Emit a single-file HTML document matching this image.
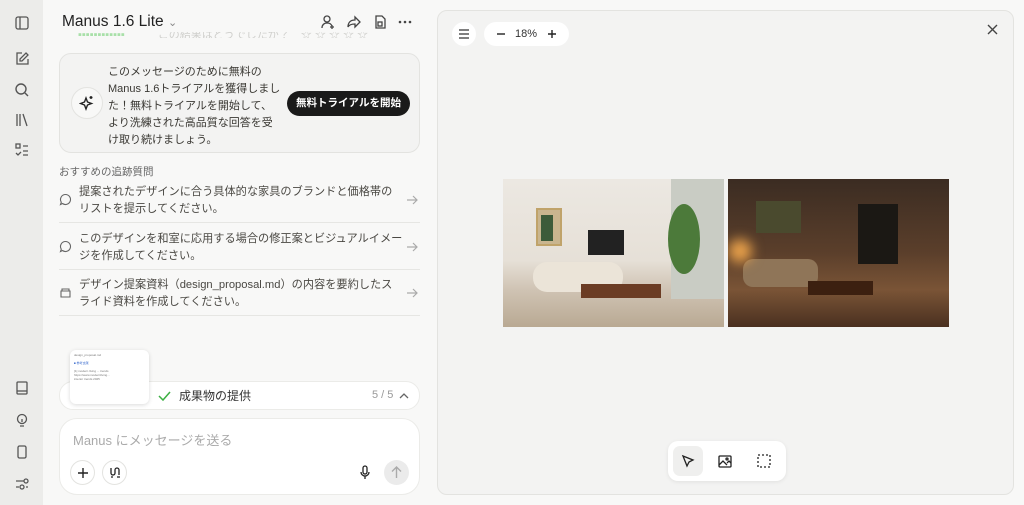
<!DOCTYPE html>
<html><head><meta charset="utf-8"><style>
*{box-sizing:border-box;margin:0;padding:0}
body{width:1024px;height:505px;overflow:hidden;background:#f8f8f7;font-family:"Liberation Sans","Noto Sans CJK JP",sans-serif;color:#34322d;position:relative}
.side{position:absolute;left:0;top:0;width:43px;height:505px;background:#ececea}
.ic{position:absolute;left:14px;width:16px;height:16px}
.abs{position:absolute}
.card{position:absolute;left:59px;top:53px;width:361px;height:100px;border:1px solid #e3e3e0;border-radius:12px;background:#f3f3f2}
.q{position:absolute;left:59px;width:361px;border-bottom:1px solid #e6e6e3;font-size:11.2px;line-height:17px;color:#4a4843}
.q span{position:absolute;left:20px;top:0;white-space:nowrap}
.q svg.a{position:absolute;right:2px;top:10px}
.q svg.l{position:absolute;left:0;top:9px}
.right{position:absolute;left:437px;top:10px;width:577px;height:485px;background:#f3f3f2;border:1px solid #e3e3e0;border-radius:10px}
</style></head><body>
<div class="side">
<svg class="ic" style="top:15px" viewBox="0 0 16 16" fill="none" stroke="#555" stroke-width="1.3"><rect x="2" y="2" width="12" height="12" rx="2"/><line x1="6" y1="2" x2="6" y2="14"/></svg>
<svg class="ic" style="top:51px" viewBox="0 0 16 16" fill="none" stroke="#555" stroke-width="1.3"><path d="M8 2H3v11h11V8"/><path d="M12 2l2 2-6 6H6V8z"/></svg>
<svg class="ic" style="top:82px" viewBox="0 0 16 16" fill="none" stroke="#555" stroke-width="1.4"><circle cx="7" cy="7" r="5"/><line x1="11" y1="11" x2="14" y2="14"/></svg>
<svg class="ic" style="top:112px" viewBox="0 0 16 16" fill="none" stroke="#555" stroke-width="1.3"><path d="M3 2v12M6 2v12M9 2l4 12"/></svg>
<svg class="ic" style="top:142px" viewBox="0 0 16 16" fill="none" stroke="#555" stroke-width="1.3"><rect x="2" y="2" width="4" height="4"/><path d="M2 11l2 2 3-3M9 4h5M9 9h5M9 13h5"/></svg>
<svg class="ic" style="top:380px" viewBox="0 0 16 16" fill="none" stroke="#555" stroke-width="1.3"><rect x="3" y="2" width="10" height="12" rx="1"/><line x1="3" y1="11" x2="13" y2="11"/></svg>
<svg class="ic" style="top:412px" viewBox="0 0 16 16" fill="none" stroke="#555" stroke-width="1.3"><circle cx="8" cy="7" r="4.5"/><path d="M6 14h4M8 7v3"/></svg>
<svg class="ic" style="top:444px" viewBox="0 0 16 16" fill="none" stroke="#555" stroke-width="1.3"><rect x="4" y="2" width="8" height="12" rx="1.5"/></svg>
<svg class="ic" style="top:476px" viewBox="0 0 16 16" fill="none" stroke="#555" stroke-width="1.3"><path d="M2 5h8M2 11h3M12 11h2"/><circle cx="12" cy="5" r="2"/><circle cx="8" cy="11" r="2"/></svg>
</div>
<div class="abs" style="left:78px;top:32px;width:340px;height:6px;overflow:hidden;font-size:11px;line-height:6px;color:#d0d0cd;white-space:nowrap"><span style="color:#a8e0a8">▪▪▪▪▪▪▪▪▪▪▪▪</span>　　　この結果はどうでしたか？　☆ ☆ ☆ ☆ ☆</div>
<div class="abs" style="left:43px;top:0;width:387px;height:32px;background:#f8f8f7"></div>
<div class="abs" style="left:62px;top:13px;font-size:15.5px;color:#222">Manus 1.6 Lite <span style="font-size:11px;color:#888">⌄</span></div>
<svg class="abs" style="left:320px;top:14px" width="16" height="16" viewBox="0 0 16 16" fill="none" stroke="#444" stroke-width="1.3"><circle cx="7" cy="5" r="3"/><path d="M2 14c0-3 2-5 5-5s4 1 5 3M12 11v4M10 13h4"/></svg>
<svg class="abs" style="left:346px;top:14px" width="16" height="16" viewBox="0 0 16 16" fill="none" stroke="#444" stroke-width="1.3"><path d="M9 3l5 5-5 5V10C5 10 3 11 2 13c0-4 2-7 7-7z"/></svg>
<svg class="abs" style="left:372px;top:14px" width="16" height="16" viewBox="0 0 16 16" fill="none" stroke="#444" stroke-width="1.3"><path d="M4 2h6l3 3v9H4z"/><rect x="6" y="8" width="4" height="4"/></svg>
<svg class="abs" style="left:397px;top:14px" width="16" height="16" viewBox="0 0 16 16" fill="#444"><circle cx="3" cy="8" r="1.3"/><circle cx="8" cy="8" r="1.3"/><circle cx="13" cy="8" r="1.3"/></svg>
<div class="card">
<div class="abs" style="left:11px;top:33px;width:32px;height:32px;border:1px solid #e3e3e0;border-radius:50%;background:#f8f8f7"><svg style="position:absolute;left:7px;top:7px" width="16" height="16" viewBox="0 0 16 16" fill="none" stroke="#222" stroke-width="1.4"><path d="M7 3l1.5 4 4 1.5-4 1.5L7 14l-1.5-4-4-1.5 4-1.5z"/><path d="M12 1v3M10.5 2.5h3"/></svg></div>
<div class="abs" style="left:48px;top:10px;font-size:11px;line-height:17px;color:#3a3833;white-space:nowrap">このメッセージのために無料の<br>Manus 1.6トライアルを獲得しまし<br>た！無料トライアルを開始して、<br>より洗練された高品質な回答を受<br>け取り続けましょう。</div>
<div class="abs" style="left:227px;top:37px;width:123px;height:25px;background:#1a1a1a;color:#fff;border-radius:13px;font-size:10.5px;font-weight:bold;text-align:center;line-height:25px">無料トライアルを開始</div>
</div>
<div class="abs" style="left:59px;top:164px;font-size:10.5px;color:#666">おすすめの追跡質問</div>
<div class="q" style="top:184px;height:39px"><svg class="l" width="13" height="13" viewBox="0 0 13 13" fill="none" stroke="#666" stroke-width="1.1"><path d="M6.5 1.5a5 5 0 1 1-3 9L1.5 11.5l.8-2.3A5 5 0 0 1 6.5 1.5z"/></svg><span>提案されたデザインに合う具体的な家具のブランドと価格帯の<br>リストを提示してください。</span><svg class="a" width="12" height="12" viewBox="0 0 12 12" fill="none" stroke="#aaa" stroke-width="1.2"><path d="M1 6h10M7 2l4 4-4 4"/></svg></div>
<div class="q" style="top:231px;height:39px"><svg class="l" width="13" height="13" viewBox="0 0 13 13" fill="none" stroke="#666" stroke-width="1.1"><path d="M6.5 1.5a5 5 0 1 1-3 9L1.5 11.5l.8-2.3A5 5 0 0 1 6.5 1.5z"/></svg><span>このデザインを和室に応用する場合の修正案とビジュアルイメー<br>ジを作成してください。</span><svg class="a" width="12" height="12" viewBox="0 0 12 12" fill="none" stroke="#aaa" stroke-width="1.2"><path d="M1 6h10M7 2l4 4-4 4"/></svg></div>
<div class="q" style="top:277px;height:39px"><svg class="l" width="13" height="13" viewBox="0 0 13 13" fill="none" stroke="#666" stroke-width="1.1"><path d="M2 5h9v6H2zM3 5V3h7v2"/></svg><span>デザイン提案資料（design_proposal.md）の内容を要約したス<br>ライド資料を作成してください。</span><svg class="a" width="12" height="12" viewBox="0 0 12 12" fill="none" stroke="#aaa" stroke-width="1.2"><path d="M1 6h10M7 2l4 4-4 4"/></svg></div>
<div class="abs" style="left:59px;top:381px;width:361px;height:29px;background:#fff;border:1px solid #ebebe8;border-radius:14px">
<svg class="abs" style="left:98px;top:8px" width="13" height="12" viewBox="0 0 13 12" fill="none" stroke="#3cb043" stroke-width="1.5"><path d="M1 6l4 4 7-8"/></svg>
<span class="abs" style="left:119px;top:5px;font-size:12px;color:#333">成果物の提供</span>
<span class="abs" style="left:312px;top:7px;font-size:11px;color:#999">5 / 5</span>
<svg class="abs" style="left:339px;top:10px" width="10" height="7" viewBox="0 0 10 7" fill="none" stroke="#666" stroke-width="1.3"><path d="M1 6l4-4 4 4"/></svg></div>
<div class="abs" style="left:70px;top:350px;width:79px;height:54px;background:#fff;border-radius:6px;box-shadow:0 1px 4px rgba(0,0,0,.15);font-size:3px;color:#777;padding:3px 4px;line-height:4px">design_proposal.md<br><br><span style="color:#36c">■ 参考文献</span><br><br>[1] modern living ... trends<br>https://www.modernliving...<br>interior trends 2025</div>
<div class="abs" style="left:59px;top:418px;width:361px;height:77px;background:#fff;border:1px solid #ebebe8;border-radius:18px">
<span class="abs" style="left:13px;top:11px;font-size:13px;color:#aaa">Manus にメッセージを送る</span>
<div class="abs" style="left:10px;top:41px;width:25px;height:25px;border:1px solid #e3e3e0;border-radius:50%"><svg style="position:absolute;left:6px;top:6px" width="12" height="12" viewBox="0 0 12 12" stroke="#222" stroke-width="1.4"><path d="M6 1v10M1 6h10"/></svg></div>
<div class="abs" style="left:42px;top:41px;width:25px;height:25px;border:1px solid #e3e3e0;border-radius:50%"><svg style="position:absolute;left:5px;top:5px" width="14" height="14" viewBox="0 0 14 14" fill="none" stroke="#222" stroke-width="1.3"><path d="M3 2v5a2 2 0 0 0 4 0V4a2 2 0 0 1 4 0v5M3 11h2M9 11h3"/></svg></div>
<svg class="abs" style="left:299px;top:46px" width="12" height="15" viewBox="0 0 12 15" fill="none" stroke="#222" stroke-width="1.3"><rect x="4" y="1" width="4" height="8" rx="2"/><path d="M2 7a4 4 0 0 0 8 0M6 11v3"/></svg>
<div class="abs" style="left:324px;top:41px;width:25px;height:25px;background:#ebebeb;border-radius:50%"><svg style="position:absolute;left:7px;top:6px" width="11" height="13" viewBox="0 0 11 13" fill="none" stroke="#aaa" stroke-width="1.4"><path d="M5.5 12V1M1 5.5l4.5-4.5 4.5 4.5"/></svg></div>
</div>
<div class="right">
<div class="abs" style="left:14px;top:11px;width:24px;height:24px;background:#fff;border-radius:12px"><svg style="position:absolute;left:6px;top:7px" width="12" height="10" viewBox="0 0 12 10" stroke="#333" stroke-width="1.2"><path d="M1 1h10M1 5h10M1 9h10"/></svg></div>
<div class="abs" style="left:46px;top:11px;width:85px;height:24px;background:#fff;border-radius:12px;font-size:11px;line-height:24px;color:#333"><svg class="abs" style="left:12px;top:7px" width="10" height="10" stroke="#222" stroke-width="1.4"><path d="M1 5h8"/></svg><span class="abs" style="left:31px">18%</span><svg class="abs" style="left:63px;top:7px" width="10" height="10" stroke="#222" stroke-width="1.4"><path d="M1 5h8M5 1v8"/></svg></div>
<svg class="abs" style="left:549px;top:13px" width="11" height="11" stroke="#444" stroke-width="1.4"><path d="M1 1l9 9M10 1l-9 9"/></svg>
<div class="abs" style="left:65px;top:168px;width:221px;height:148px;overflow:hidden;background:linear-gradient(180deg,#ece8e2 0%,#e6e0d7 55%,#cfc3b3 75%,#b9a993 100%)">
<div class="abs" style="left:33px;top:29px;width:26px;height:38px;background:#c9b58f;border:2px solid #c0a36a"></div>
<div class="abs" style="left:38px;top:36px;width:12px;height:26px;background:#3d5b3a"></div>
<div class="abs" style="left:85px;top:51px;width:36px;height:25px;background:#222"></div>
<div class="abs" style="left:168px;top:0;width:53px;height:120px;background:#c9ccc4"></div>
<div class="abs" style="left:165px;top:25px;width:32px;height:70px;background:#4c7a3a;border-radius:50%"></div>
<div class="abs" style="left:30px;top:83px;width:90px;height:30px;background:#ebe4d8;border-radius:14px"></div>
<div class="abs" style="left:78px;top:105px;width:80px;height:14px;background:#6b3c24"></div>
</div>
<div class="abs" style="left:290px;top:168px;width:221px;height:148px;overflow:hidden;background:linear-gradient(180deg,#3b2c22 0%,#5b3f2b 50%,#7a5436 75%,#4a3020 100%)">
<div class="abs" style="left:28px;top:22px;width:45px;height:32px;background:#4a4a2e"></div>
<div class="abs" style="left:130px;top:25px;width:40px;height:60px;background:#1b1814"></div>
<div class="abs" style="left:15px;top:80px;width:75px;height:28px;background:#8f7558;border-radius:10px"></div>
<div class="abs" style="left:80px;top:102px;width:65px;height:14px;background:#3c2010"></div>
<div class="abs" style="left:0;top:60px;width:24px;height:24px;background:#e8a04a;border-radius:50%;filter:blur(6px)"></div>
</div>
<div class="abs" style="left:230px;top:430px;width:118px;height:40px;background:#fff;border-radius:10px;box-shadow:0 1px 4px rgba(0,0,0,.08)">
<div class="abs" style="left:5px;top:5px;width:30px;height:30px;background:#efefee;border-radius:7px"><svg style="position:absolute;left:8px;top:8px" width="14" height="14" viewBox="0 0 14 14" fill="none" stroke="#222" stroke-width="1.3"><path d="M2 2l10 4-4 2-2 4z"/></svg></div>
<svg class="abs" style="left:50px;top:13px" width="15" height="15" viewBox="0 0 15 15" fill="none" stroke="#222" stroke-width="1.3"><rect x="1" y="2" width="12" height="11" rx="1"/><path d="M1 11l4-4 4 4M9 9l2-2 2 2"/><circle cx="9" cy="5" r="1"/></svg>
<svg class="abs" style="left:89px;top:13px" width="15" height="15" viewBox="0 0 15 15" fill="none" stroke="#222" stroke-width="1.3" stroke-dasharray="2 2"><rect x="1" y="1" width="12" height="12"/></svg>
</div>
</div>
</body></html>
